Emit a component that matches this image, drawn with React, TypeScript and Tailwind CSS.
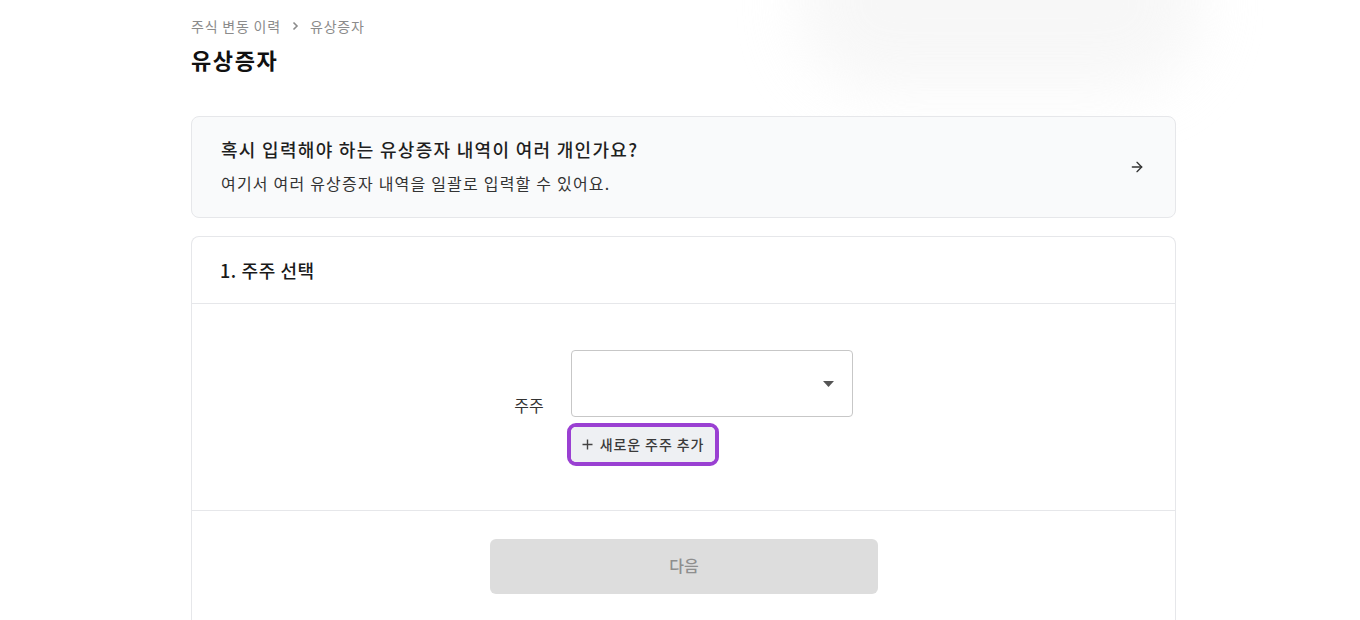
import { ArrowRight } from 'lucide-react'

export default function App() {
  return (
    <div
      className="relative min-h-[620px] overflow-hidden bg-white text-[#222]"
      style={{ fontFamily: '"Noto Sans CJK KR", "Noto Sans", sans-serif' }}
    >
      {/* soft shadow from something above the viewport */}
      <div className="pointer-events-none absolute left-[800px] top-[-90px] h-[180px] w-[400px] rounded-[80px] bg-[#f2f2f2] blur-[30px] opacity-60" />

      <div className="relative ml-[191px] w-[985px] pt-[15px]">
        {/* Breadcrumb */}
        <div className="flex items-center gap-[10px] text-[14px] leading-[22px] tracking-[0.8px] text-[#8b8b8b]">
          <span>주식 변동 이력</span>
          <svg width="9" height="10" viewBox="0 0 9 10" fill="none" stroke="#8b8b8b" strokeWidth="1.6">
            <path d="M2.5 1.5L6 5L2.5 8.5" />
          </svg>
          <span>유상증자</span>
        </div>
        <h1 className="mt-[7px] text-[22px] font-bold leading-[30px] tracking-[1.6px] text-[#111]">유상증자</h1>

        {/* Bulk entry banner */}
        <div className="mt-[42px] flex h-[102px] items-center justify-between rounded-[8px] border border-[#e6e7ea] bg-[#f9fafb] pl-[29px] pr-[30px]">
          <div className="mt-[-4px]">
            <div className="text-[18px] font-medium leading-[26px] tracking-[1.3px] text-[#1f1f1f]">
              혹시 입력해야 하는 유상증자 내역이 여러 개인가요?
            </div>
            <div className="mt-[10px] text-[16px] leading-[22px] tracking-[1.2px] text-[#333]">
              여기서 여러 유상증자 내역을 일괄로 입력할 수 있어요.
            </div>
          </div>
          <ArrowRight size={16} strokeWidth={2} className="text-[#333]" />
        </div>

        {/* Step card */}
        <div className="mt-[18px] rounded-t-[8px] border border-b-0 border-[#e6e7ea]">
          <div className="flex h-[67px] items-center border-b border-[#e6e7ea] pl-[28px]">
            <span className="text-[18px] font-medium tracking-[0.6px] text-[#1a1a1a]">1. 주주 선택</span>
          </div>

          <div className="flex h-[207px] justify-center border-b border-[#e6e7ea] pt-[46px]">
            <div className="flex items-start">
              <span className="mr-[27px] mt-[43px] text-[16px] text-[#333]">주주</span>
              <div>
                <div className="flex h-[67px] w-[282px] items-center justify-end rounded-[4px] border border-[#c7c7c7] bg-white pr-[18px]">
                  <svg width="11" height="6" viewBox="0 0 11 6">
                    <path d="M0 0H11L5.5 6Z" fill="#555" />
                  </svg>
                </div>
                <div className="ml-[-4px] mt-[6px] inline-block rounded-[9px] border-[4px] border-[#9a40d2]">
                  <button className="flex h-[35px] items-center gap-[7px] rounded-[5px] bg-[#eef0f3] px-[11px] text-[14px] font-medium tracking-[0.9px] text-[#3a3a3a]">
                    <svg width="11" height="11" viewBox="0 0 11 11" stroke="#444" strokeWidth="1.4">
                      <path d="M5.5 0.5V10.5M0.5 5.5H10.5" />
                    </svg>
                    새로운 주주 추가
                  </button>
                </div>
              </div>
            </div>
          </div>

          <div className="flex justify-center pb-[40px] pl-[1px] pt-[28px]">
            <button className="flex h-[55px] w-[388px] items-center justify-center rounded-[6px] bg-[#dddddd] pb-[3px] text-[16px] font-medium text-[#8e8e8e]">
              다음
            </button>
          </div>
        </div>
      </div>
    </div>
  )
}
